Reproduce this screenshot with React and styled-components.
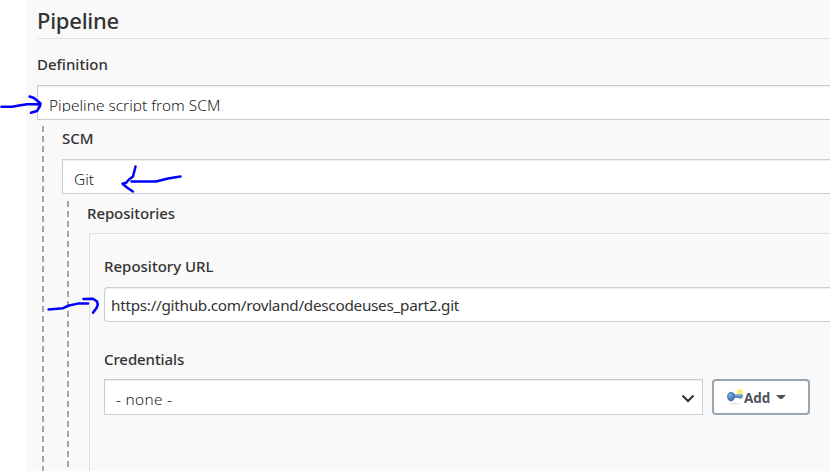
import React from "react";
import styled, { createGlobalStyle } from "styled-components";

const GlobalStyle = createGlobalStyle`
  * { box-sizing: border-box; }
  body { margin: 0; background: #fff; overflow: hidden; }
`;

const Page = styled.div`
  position: relative;
  width: 830px;
  height: 471px;
  padding-left: 26px;
  overflow: hidden;
  background: #fff;
  color: #333;
  font-family: "Noto Sans", "Open Sans", sans-serif;
  font-size: 15px;
`;

const Panel = styled.main`
  height: 471px;
  padding-left: 11px;
  background: #f9f9f9;
  display: flex;
  flex-direction: column;
`;

const Title = styled.h1`
  margin: 0;
  height: 39px;
  flex: none;
  border-bottom: 1px solid #dedede;
  font-size: 22px;
  font-weight: 500;
  line-height: 41px;
  letter-spacing: -0.25px;
  white-space: nowrap;
`;

const Label = styled.div`
  flex: none;
  height: ${(p) => p.$height}px;
  padding-top: ${(p) => p.$top}px;
  font-size: 15px;
  font-weight: 500;
  line-height: 20px;
  letter-spacing: ${(p) => p.$track || 0}px;
  white-space: nowrap;
`;

const Field = styled.div`
  flex: none;
  display: flex;
  align-items: flex-start;
  justify-content: space-between;
  width: ${(p) => (p.$width ? `${p.$width}px` : "auto")};
  height: ${(p) => p.$height || 35}px;
  padding: ${(p) => p.$top || 10}px 7px 0 ${(p) => p.$inset || 11}px;
  border: 1px solid #ccc;
  border-right-width: ${(p) => (p.$width ? 1 : 0)}px;
  border-radius: ${(p) => (p.$rounded ? "4px 0 0 4px" : 0)};
  background: #fff;
  box-shadow: inset 0 1px 1px rgba(0, 0, 0, 0.075);
`;

const Value = styled.span`
  height: ${(p) => p.$clip || 24}px;
  overflow: hidden;
  color: ${(p) => (p.$weight ? "#333" : "#1c1c1c")};
  font-size: ${(p) => p.$size || 15.4}px;
  font-weight: ${(p) => p.$weight || 300};
  line-height: 20px;
  letter-spacing: ${(p) => p.$track || 0}px;
  white-space: nowrap;
`;

const Nested = styled.section`
  flex: ${(p) => (p.$height ? "none" : 1)};
  height: ${(p) => (p.$height ? `${p.$height}px` : "auto")};
  margin: ${(p) => p.$top}px 0 0 5px;
  padding-left: 20px;
  display: flex;
  flex-direction: column;
  background: repeating-linear-gradient(#a6a6a6 0 6px, transparent 6px 10px) 0 0 / 2px 100% no-repeat;
`;

const Repository = styled.div`
  flex: none;
  height: 240px;
  margin-left: 2px;
  padding-left: 14px;
  border-top: 1px solid #dedede;
  border-left: 1px solid #dedede;
`;

const Row = styled.div`
  display: flex;
  gap: 9px;
`;

const AddButton = styled.button`
  display: flex;
  align-items: center;
  width: 98px;
  height: 36px;
  padding: 0 0 0 13px;
  border: 2px solid #98a6af;
  border-radius: 4px;
  background: #fff;
  color: #4d545d;
  font: 700 13.5px "Open Sans", sans-serif;
  text-align: left;
`;

const AddText = styled.span`
  width: 33px;
  padding: 2px 0 0 1px;
  line-height: 18px;
`;

const Annotations = styled.svg`
  position: absolute;
  inset: 0;
  pointer-events: none;
  fill: none;
  stroke: #0000fa;
  stroke-width: 2.5;
  stroke-linecap: round;
  stroke-linejoin: round;
`;

const Chevron = styled.svg`
  margin-top: 3px;
  fill: none;
  stroke: #303030;
  stroke-width: 2;
`;

function KeyIcon() {
  return (
    <svg width="16" height="16" viewBox="0 0 16 16">
      <defs>
        <radialGradient id="bow" cx="40%" cy="35%">
          <stop offset="0" stopColor="#86abd5" />
          <stop offset="1" stopColor="#4978b5" />
        </radialGradient>
        <radialGradient id="shade">
          <stop offset="0" stopColor="#d8d8d8" />
          <stop offset="1" stopColor="#fff" />
        </radialGradient>
      </defs>
      <ellipse cx="8" cy="14.6" rx="7" ry="1.3" fill="url(#shade)" />
      <circle cx="12.8" cy="2.9" r="2.9" fill="#fff16a" />
      <path d="M6 5.2h9.5l.5 1.2-.4 2.4h-1.4v1h-2V9H6z" fill="#5b88c1" />
      <path d="M6.5 6.2h9" stroke="#9dbbe0" strokeWidth="1" />
      <ellipse cx="4" cy="7.6" rx="4" ry="4.8" fill="url(#bow)" />
    </svg>
  );
}

export default function App() {
  return (
    <>
      <GlobalStyle />
      <Page>
        <Panel>
          <Title>Pipeline</Title>
          <Label $height={46} $top={15}>Definition</Label>
          <Field>
            <Value $clip={16} $track={0.03}>Pipeline script from SCM</Value>
          </Field>
          <Nested $top={6}>
            <Label $height={33} $top={2}>SCM</Label>
            <Field>
              <Value>Git</Value>
            </Field>
            <Nested $top={7} $height={266}>
              <Label $height={32} $top={2} $track={-0.1}>Repositories</Label>
              <Repository>
                <Label $height={53} $top={22}>Repository URL</Label>
                <Field $rounded $inset={6} $top={7}>
                  <Value $weight={400} $size={15.3} $track={-0.28}>https://github.com/rovland/descodeuses_part2.git</Value>
                </Field>
                <Label $height={57} $top={27} $track={-0.1}>Credentials</Label>
                <Row>
                  <Field $width={599} $height={36}>
                    <Value $track={0.3}>- none -</Value>
                    <Chevron width="14" height="12" viewBox="0 0 14 12">
                      <path d="M1.5 2.5 7 8l5.5-5.5" />
                    </Chevron>
                  </Field>
                  <AddButton>
                    <KeyIcon />
                    <AddText>Add</AddText>
                    <svg width="10" height="5" viewBox="0 0 10 5">
                      <path d="M0 0h10L6 4H4z" fill="#4d545d" />
                    </svg>
                  </AddButton>
                </Row>
              </Repository>
            </Nested>
          </Nested>
        </Panel>
        <Annotations width="830" height="471" viewBox="0 0 830 471">
          <path d="M1.5 106.7H12L19 105.5 27 104.2H35L40 104.5M29.5 96.5 34 98 40.5 103.5 40 106 37 111 31 112.7" />
          <path d="M135.5 166.5 133 176.5 129 179.5 126 182.8 122.5 183.8 127 187.5 132.8 191.5M131.5 181.5H156L168 178.5 180.5 176.5" />
          <path d="M48.5 309.5 63 308.2 69 305.5 78 303.6 88 303.4M83.5 299 93 298.8 97 301.5 97.8 304.5 96.5 308 93 312.7" />
        </Annotations>
      </Page>
    </>
  );
}
